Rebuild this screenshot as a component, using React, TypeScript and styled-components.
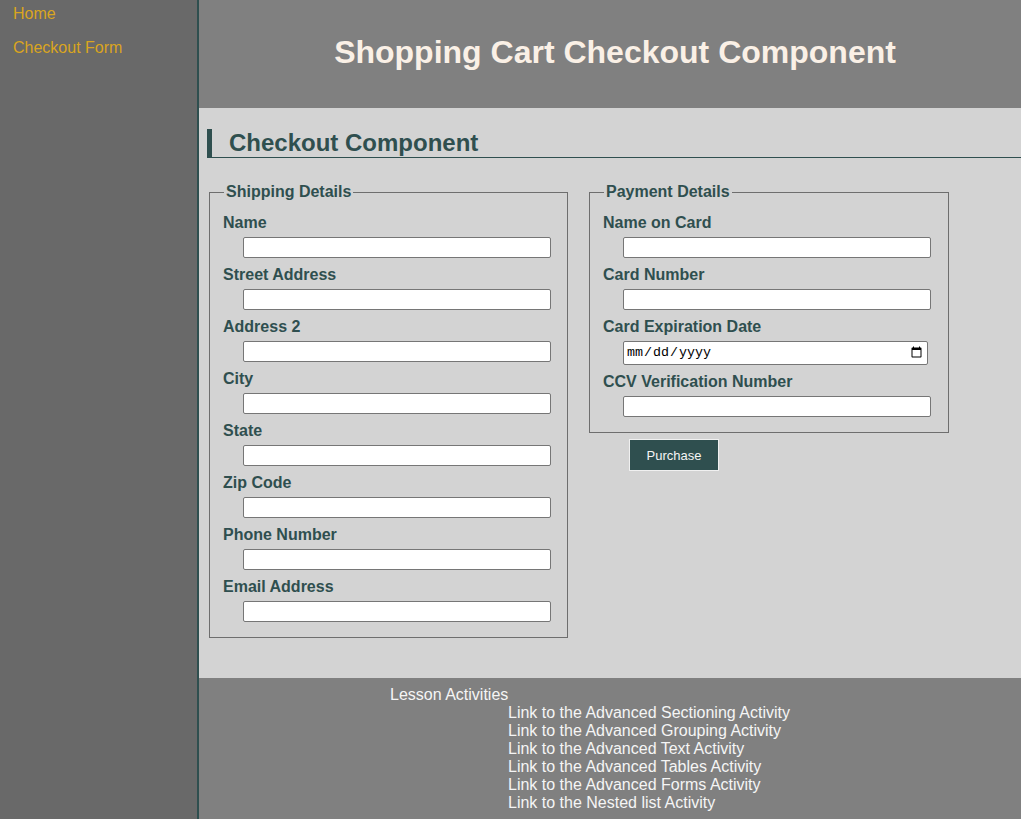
import React from "react";
import styled, { createGlobalStyle } from "styled-components";

const Global = createGlobalStyle`
  html, body { margin: 0; padding: 0; }
  body { font-family: "Liberation Sans", Arial, sans-serif; background: #808080; }
`;

const Page = styled.div`
  display: grid;
  grid-template-columns: 199px 1fr;
  min-height: 100vh;
`;

const Sidebar = styled.nav`
  background: #696969;
  border-right: 2px solid #2f4f4f;
  padding: 5px 13px;
  display: flex;
  flex-direction: column;
  gap: 16px;
`;

const NavLink = styled.a`
  color: #daa520;
  font-size: 16px;
  line-height: 18px;
  text-decoration: none;
`;

const Main = styled.main`
  display: flex;
  flex-direction: column;
  min-width: 0;
`;

const Header = styled.header`
  height: 108px;
  box-sizing: border-box;
  background: #808080;
  display: flex;
  align-items: center;
  justify-content: center;
  padding: 0 0 4px 10px;
`;

const Title = styled.h1`
  margin: 0;
  color: #faf0e6;
  font-size: 32px;
  font-weight: bold;
  line-height: 37px;
`;

const Content = styled.section`
  background: #d3d3d3;
  padding: 21px 0 40px 8px;
`;

const SectionTitle = styled.h2`
  margin: 0 0 25px 0;
  border-left: 5px solid #2f4f4f;
  border-bottom: 1px solid #2f4f4f;
  padding-left: 17px;
  color: #2f4f4f;
  font-size: 24px;
  font-weight: bold;
  line-height: 28px;
`;

const Columns = styled.div`
  display: flex;
  align-items: flex-start;
  gap: 21px;
  padding-left: 2px;
`;

const Column = styled.div`
  display: flex;
  flex-direction: column;
  align-items: flex-start;
`;

const Fieldset = styled.fieldset<{ $w: number }>`
  margin: 0;
  width: ${(p) => p.$w}px;
  box-sizing: border-box;
  border: 1px solid #6e6e6e;
  padding: 5px 12px 15px 12px;
`;

const Legend = styled.legend`
  margin-left: 2px;
  color: #2f4f4f;
  font-size: 16px;
  font-weight: bold;
  line-height: 18px;
  padding: 0 2px;
`;

const Field = styled.div`
  display: flex;
  flex-direction: column;
  align-items: flex-start;
`;

const Label = styled.label`
  display: block;
  margin: 8px 0 5px 1px;
  color: #2f4f4f;
  font-size: 16px;
  font-weight: bold;
  line-height: 18px;
`;

const Input = styled.input<{ $w?: number; $h?: number }>`
  box-sizing: border-box;
  margin: 0 0 0 21px;
  width: ${(p) => p.$w ?? 308}px;
  height: ${(p) => p.$h ?? 21}px;
  border: 1px solid #767676;
  border-radius: 2px;
  background: #fff;
  padding: 1px 2px;
  font-family: "Liberation Mono", "Courier New", monospace;
  font-size: 13.33px;
`;

const Button = styled.button`
  margin: 6px 0 0 40px;
  width: 90px;
  height: 32px;
  background: #2f4f4f;
  color: #f5f5f5;
  border: 1px solid #f0f0f0;
  font-family: "Liberation Sans", Arial, sans-serif;
  font-size: 13px;
  cursor: pointer;
`;

const Footer = styled.footer`
  background: #808080;
  flex: 1;
  padding: 8px 0 7px 191px;
  color: #f5f5f5;
  font-size: 16px;
  line-height: 18px;
`;

const FooterList = styled.ul`
  list-style: none;
  margin: 0;
  padding: 0 0 0 118px;
`;

const FooterLink = styled.a`
  color: #f5f5f5;
  text-decoration: none;
`;

const shipping = [
  "Name",
  "Street Address",
  "Address 2",
  "City",
  "State",
  "Zip Code",
  "Phone Number",
  "Email Address",
];

const links = [
  "Link to the Advanced Sectioning Activity",
  "Link to the Advanced Grouping Activity",
  "Link to the Advanced Text Activity",
  "Link to the Advanced Tables Activity",
  "Link to the Advanced Forms Activity",
  "Link to the Nested list Activity",
];

export default function App() {
  return (
    <>
      <Global />
      <Page>
        <Sidebar>
          <NavLink href="#">Home</NavLink>
          <NavLink href="#">Checkout Form</NavLink>
        </Sidebar>
        <Main>
          <Header>
            <Title>Shopping Cart Checkout Component</Title>
          </Header>
          <Content>
            <SectionTitle>Checkout Component</SectionTitle>
            <Columns>
              <Fieldset $w={359}>
                <Legend>Shipping Details</Legend>
                {shipping.map((l) => (
                  <Field key={l}>
                    <Label>{l}</Label>
                    <Input type="text" />
                  </Field>
                ))}
              </Fieldset>
              <Column>
                <Fieldset $w={360}>
                  <Legend>Payment Details</Legend>
                  <Field>
                    <Label>Name on Card</Label>
                    <Input type="text" />
                  </Field>
                  <Field>
                    <Label>Card Number</Label>
                    <Input type="text" />
                  </Field>
                  <Field>
                    <Label>Card Expiration Date</Label>
                    <Input type="date" $w={305} $h={24} />
                  </Field>
                  <Field>
                    <Label>CCV Verification Number</Label>
                    <Input type="text" />
                  </Field>
                </Fieldset>
                <Button type="button">Purchase</Button>
              </Column>
            </Columns>
          </Content>
          <Footer>
            Lesson Activities
            <FooterList>
              {links.map((l) => (
                <li key={l}>
                  <FooterLink href="#">{l}</FooterLink>
                </li>
              ))}
            </FooterList>
          </Footer>
        </Main>
      </Page>
    </>
  );
}
